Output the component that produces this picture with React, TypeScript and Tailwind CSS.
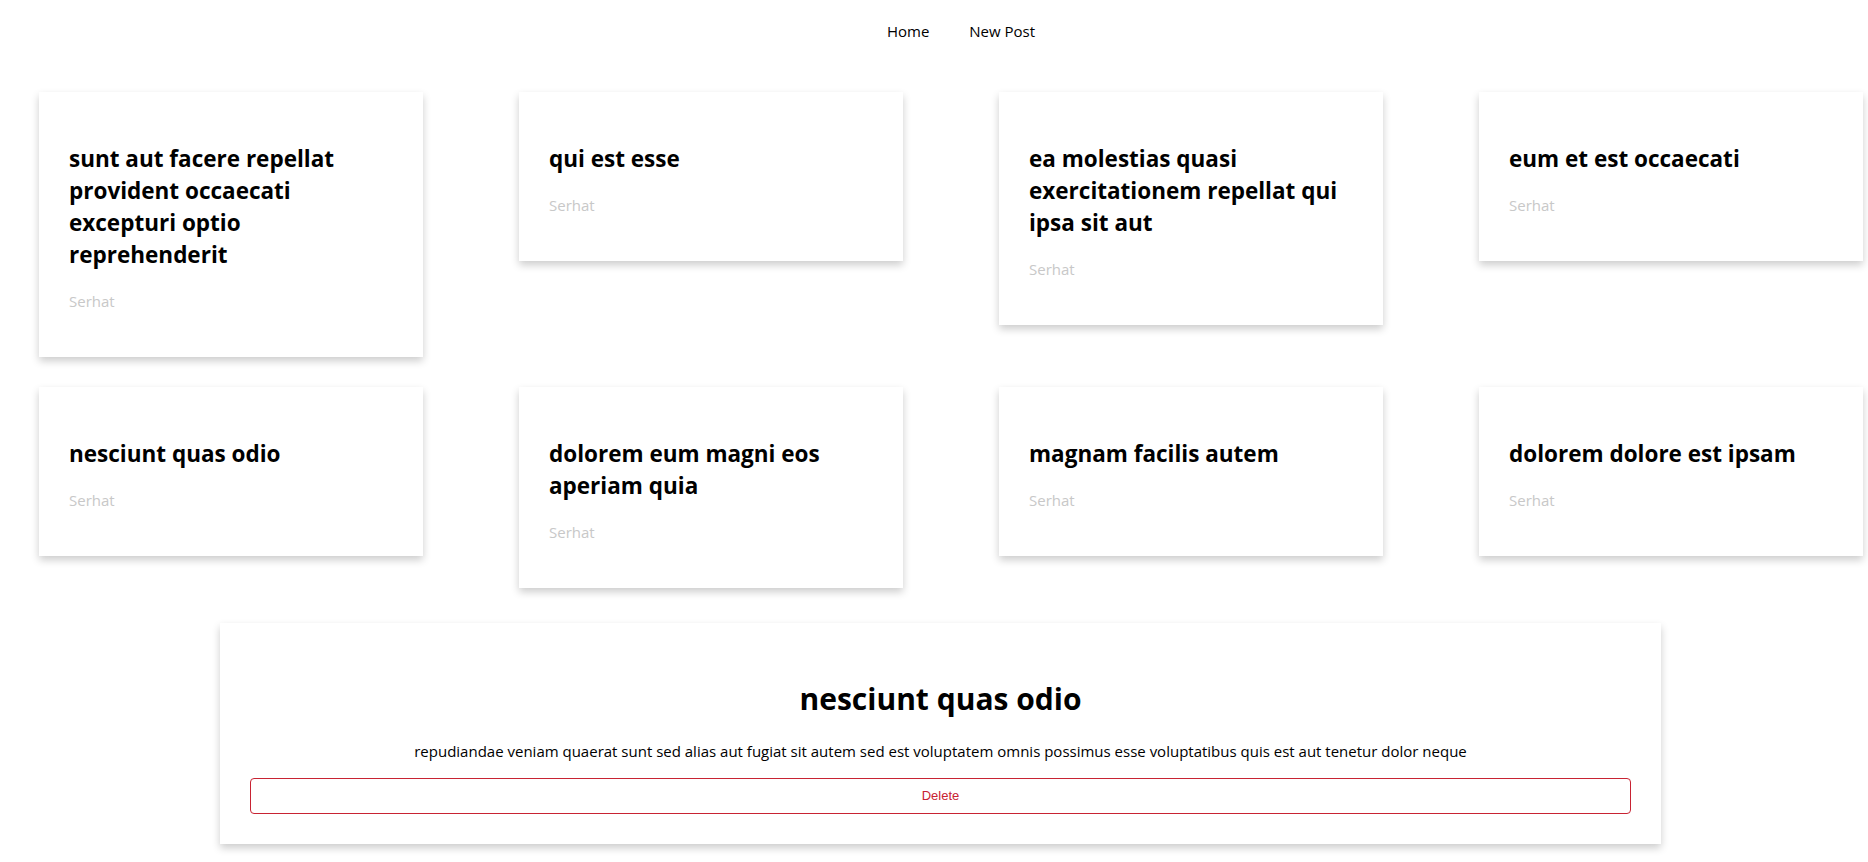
import React from 'react';

type Post = { id: number; title: string };

const posts: Post[] = [
  { id: 1, title: 'sunt aut facere repellat provident occaecati excepturi optio reprehenderit' },
  { id: 2, title: 'qui est esse' },
  { id: 3, title: 'ea molestias quasi exercitationem repellat qui ipsa sit aut' },
  { id: 4, title: 'eum et est occaecati' },
  { id: 5, title: 'nesciunt quas odio' },
  { id: 6, title: 'dolorem eum magni eos aperiam quia' },
  { id: 7, title: 'magnam facilis autem' },
  { id: 8, title: 'dolorem dolore est ipsam' },
];

const PostCard: React.FC<{ post: Post }> = ({ post }) => (
  <div className="bg-white p-[30px] shadow-[0_4px_8px_0_rgba(0,0,0,0.2)]">
    <h2 className="mt-[21px] mb-[20px] text-[22.5px] font-bold leading-[32px] text-black">{post.title}</h2>
    <p className="mb-[15px] text-[15px] leading-[21px] text-[#c8c8c8]">Serhat</p>
  </div>
);

export default function App() {
  return (
    <div className="min-h-screen bg-white font-['Open_Sans',sans-serif] text-black">
      <nav className="flex h-[63px] items-center justify-center pl-[54px] text-[15px]">
        <a className="px-5 cursor-pointer">Home</a>
        <a className="px-5 cursor-pointer">New Post</a>
      </nav>

      <div className="ml-[39px] mt-[29px] grid w-[1824px] grid-cols-4 items-start gap-x-[96px] gap-y-[30px]">
        {posts.map((p) => (
          <PostCard key={p.id} post={p} />
        ))}
      </div>

      <div className="ml-[220px] mt-[35px] w-[1441px] bg-white p-[30px] text-center shadow-[0_4px_8px_0_rgba(0,0,0,0.2)]">
        <h1 className="mt-[24px] mb-[21px] text-[30px] font-bold leading-[43px]">nesciunt quas odio</h1>
        <p className="mb-[16px] text-[15px] leading-[21px]">
          repudiandae veniam quaerat sunt sed alias aut fugiat sit autem sed est voluptatem omnis possimus esse voluptatibus quis est aut tenetur dolor neque
        </p>
        <button className="block h-[36px] w-full rounded-[4px] border border-[#c82333] bg-white font-['Liberation_Sans',Arial,sans-serif] text-[13px] text-[#c82333]">
          Delete
        </button>
      </div>
    </div>
  );
}
